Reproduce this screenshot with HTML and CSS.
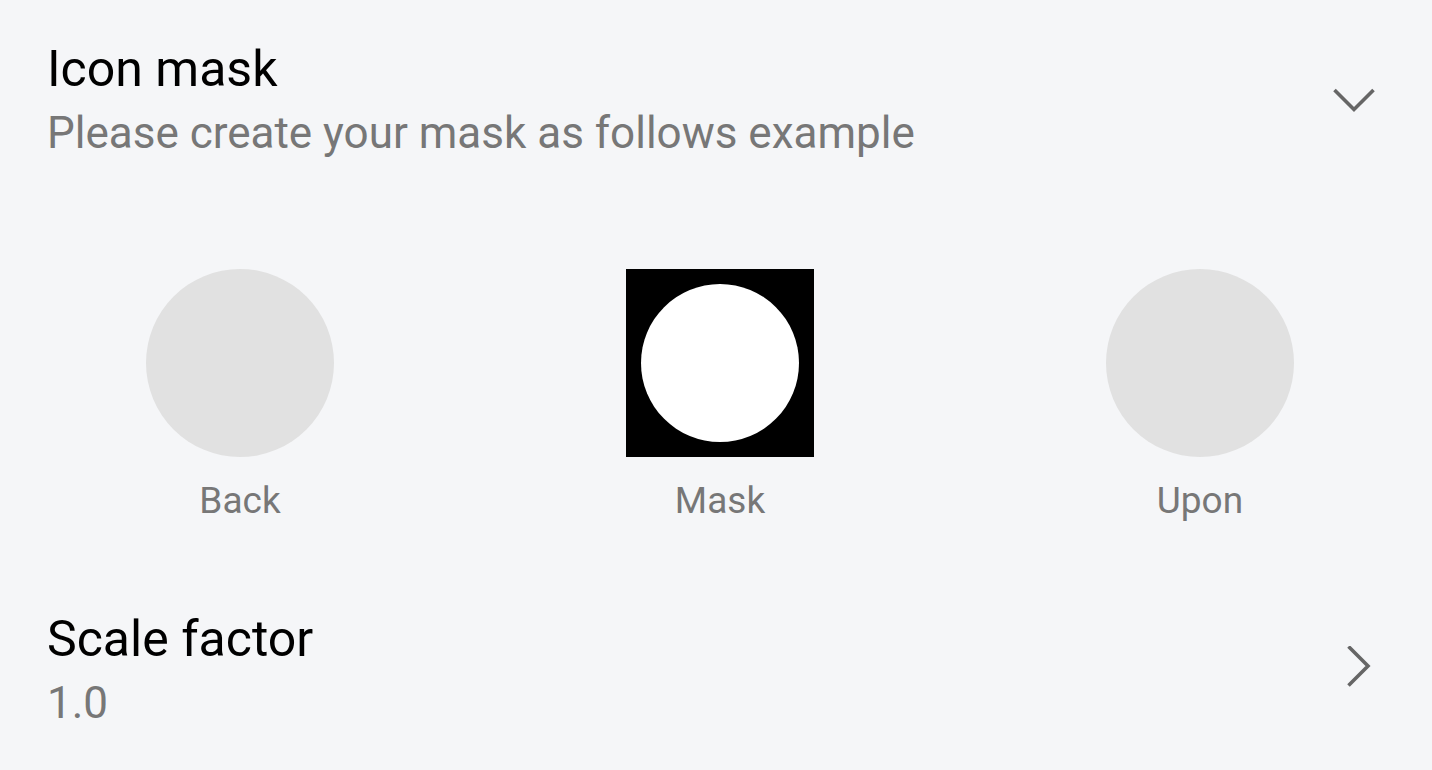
FILE: index.html
```html
<!DOCTYPE html>
<html>
<head>
<meta charset="utf-8">
<link rel="stylesheet" href="styles.css">
</head>
<body>
<div class="page">
  <div class="pref pref-top">
    <div class="pref-text">
      <div class="pref-title">Icon mask</div>
      <div class="pref-summary">Please create your mask as follows example</div>
    </div>
    <svg class="chev" width="48" height="48" viewBox="0 0 48 48"><path d="M2.5 14 L22 33.5 L41.5 14" fill="none" stroke="#666" stroke-width="3.6"/></svg>
  </div>

  <div class="examples">
    <div class="example">
      <div class="shape circle"></div>
      <div class="label">Back</div>
    </div>
    <div class="example">
      <div class="shape mask"><div class="mask-hole"></div></div>
      <div class="label">Mask</div>
    </div>
    <div class="example">
      <div class="shape circle"></div>
      <div class="label">Upon</div>
    </div>
  </div>

  <div class="pref pref-bottom">
    <div class="pref-text">
      <div class="pref-title">Scale factor</div>
      <div class="pref-summary">1.0</div>
    </div>
    <svg class="chev" width="48" height="48" viewBox="0 0 48 48"><path d="M16.5 0.5 L36 20 L16.5 39.5" fill="none" stroke="#666" stroke-width="3.6"/></svg>
  </div>
</div>
</body>
</html>
```

FILE: styles.css
```css
html, body {
  margin: 0;
  padding: 0;
  background: #f5f6f8;
}
body {
  font-family: Roboto, "Noto Sans", "Liberation Sans", sans-serif;
  width: 1432px;
  height: 770px;
  overflow: hidden;
}
.page {
  display: flex;
  flex-direction: column;
}
.pref {
  display: flex;
  align-items: center;
  justify-content: space-between;
  padding: 0 52px 0 47px;
}
.pref-top {
  padding-top: 40px;
}
.pref-bottom {
  margin-top: 88px;
}
.pref-title {
  font-size: 50px;
  line-height: 59px;
  color: #000;
}
.pref-summary {
  font-size: 44px;
  line-height: 52px;
  color: #777;
  margin-top: 8px;
}
.chev {
  display: block;
  flex: none;
}
.examples {
  display: grid;
  grid-template-columns: 480px 480px 480px;
  width: 1440px;
  margin-top: 110px;
}
.example {
  display: flex;
  flex-direction: column;
  align-items: center;
}
.shape {
  width: 188px;
  height: 188px;
}
.circle {
  border-radius: 50%;
  background: #e1e1e1;
}
.mask {
  background: #000;
  display: flex;
  align-items: center;
  justify-content: center;
}
.mask-hole {
  width: 158px;
  height: 158px;
  border-radius: 50%;
  background: #fff;
}
.label {
  margin-top: 22px;
  font-size: 37px;
  line-height: 43px;
  color: #777;
}
```
